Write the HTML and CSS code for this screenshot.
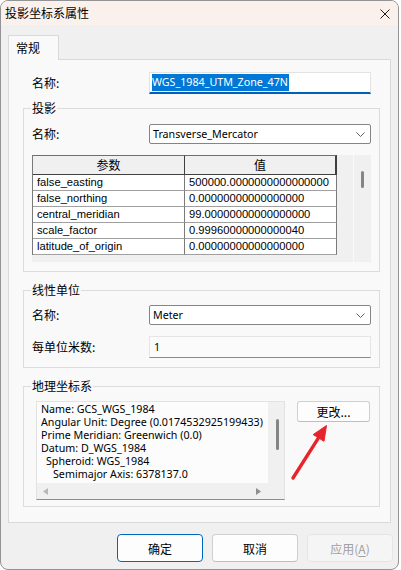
FILE: index.html
```html
<!DOCTYPE html>
<html lang="zh-CN">
<head>
<meta charset="utf-8">
<title>投影坐标系属性</title>
<link rel="stylesheet" href="styles.css">
</head>
<body>
<div class="window">
  <div class="titlebar">
    <span class="title">投影坐标系属性</span>
    <svg class="close" width="10" height="10" viewBox="0 0 10 10"><path d="M0.5 0.5L9.5 9.5M9.5 0.5L0.5 9.5" stroke="#1b1b1b" stroke-width="1"/></svg>
  </div>
  <div class="body">
    <div class="tabs"><div class="tab">常规</div></div>
    <div class="page">
      <div class="name-row">
        <span class="label">名称:</span>
        <div class="input focused"><span class="sel">WGS_1984_UTM_Zone_47N</span></div>
      </div>

      <fieldset class="group g-proj">
        <legend>投影</legend>
        <div class="ginner">
          <div class="row">
            <span class="label">名称:</span>
            <div class="combo"><span class="latin">Transverse_Mercator</span><svg class="chev" width="9" height="5" viewBox="0 0 9 5"><path d="M0.5 0.5L4.5 4.5L8.5 0.5" fill="none" stroke="#606060" stroke-width="1"/></svg></div>
          </div>
          <div class="grid-area">
            <div class="grid">
              <div class="ptable">
                <div class="hcell">参数</div><div class="hcell last">值</div>
                <div class="cell">false_easting</div><div class="cell">500000.0000000000000000</div>
                <div class="cell">false_northing</div><div class="cell">0.00000000000000000</div>
                <div class="cell">central_meridian</div><div class="cell">99.00000000000000000</div>
                <div class="cell">scale_factor</div><div class="cell">0.99960000000000040</div>
                <div class="cell">latitude_of_origin</div><div class="cell">0.00000000000000000</div>
              </div>
            </div>
            <div class="vscroll"><div class="vthumb"></div></div>
          </div>
        </div>
      </fieldset>

      <fieldset class="group g-unit">
        <legend>线性单位</legend>
        <div class="ginner">
          <div class="row">
            <span class="label">名称:</span>
            <div class="combo"><span class="latin">Meter</span><svg class="chev" width="9" height="5" viewBox="0 0 9 5"><path d="M0.5 0.5L4.5 4.5L8.5 0.5" fill="none" stroke="#606060" stroke-width="1"/></svg></div>
          </div>
          <div class="row row2">
            <span class="label">每单位米数:</span>
            <div class="input plain"><span class="latin">1</span></div>
          </div>
        </div>
      </fieldset>

      <fieldset class="group g-geo">
        <legend>地理坐标系</legend>
        <div class="ginner geo-inner">
          <div class="textbox">
            <div class="tb-main">
              <div class="tb-text latin">
                <div class="line">Name: GCS_WGS_1984</div>
                <div class="line">Angular Unit: Degree (0.0174532925199433)</div>
                <div class="line">Prime Meridian: Greenwich (0.0)</div>
                <div class="line">Datum: D_WGS_1984</div>
                <div class="line ind1">Spheroid: WGS_1984</div>
                <div class="line ind2">Semimajor Axis: 6378137.0</div>
              </div>
              <div class="tb-vscroll"><div class="tb-vthumb"></div></div>
            </div>
            <div class="tb-hscroll">
              <svg class="arr" width="5" height="7" viewBox="0 0 5 7"><path d="M5 0L0 3.5L5 7Z" fill="#b8b8b8"/></svg>
              <svg class="arr" width="5" height="7" viewBox="0 0 5 7"><path d="M0 0L5 3.5L0 7Z" fill="#8e8e8e"/></svg>
              <span class="corner"></span>
            </div>
          </div>
          <div class="btn small">更改...</div>
        </div>
      </fieldset>
    </div>

    <div class="buttons">
      <div class="btn big default">确定</div>
      <div class="btn big">取消</div>
      <div class="btn big disabled">应用(<u>A</u>)</div>
    </div>
  </div>

  <svg class="arrow" width="44" height="64" viewBox="0 0 44 64">
    <path d="M5 58L30.5 17.8" stroke="#e8242b" stroke-width="3.4" stroke-linecap="round" fill="none"/>
    <path d="M38.5 5.5L36 21.3L25.2 14.6Z" fill="#e8242b" stroke="#e8242b" stroke-width="1" stroke-linejoin="round"/>
  </svg>
</div>
</body>
</html>
```

FILE: styles.css
```css
* { box-sizing: border-box; }
html, body { margin: 0; padding: 0; background: #ffffff; }
body {
  font-family: "Noto Sans CJK SC", "Noto Sans", sans-serif;
  font-size: 12px;
  color: #000;
}
.latin { font-family: "Noto Sans", "Noto Sans CJK SC", sans-serif; font-size: 10.7px; }

.window {
  position: relative;
  width: 399px;
  height: 570px;
  border: 1px solid #939393;
  border-radius: 8px;
  background: #f0f0f0;
  overflow: hidden;
}
.titlebar {
  height: 24px;
  background: #faf1ec;
  display: flex;
  align-items: center;
  justify-content: space-between;
  padding: 0 8px 0 4px;
}
.title { font-size: 12px; line-height: 16px; }
.close { display: block; margin-top: 1px; }

.body { padding: 10px 0 0 7px; }
.tabs { display: flex; height: 24px; position: relative; z-index: 1; }
.tab {
  width: 51px;
  height: 25px;
  background: #f9f9f9;
  border: 1px solid #d9d9d9;
  border-bottom: none;
  padding-left: 7px;
  line-height: 23px;
}
.page {
  width: 383px;
  height: 464px;
  border: 1px solid #d9d9d9;
  background: #f9f9f9;
  padding-top: 12px;
}

.name-row, .row { display: flex; align-items: center; }
.name-row { height: 22px; padding-left: 23px; }
.label { width: 117px; flex: none; line-height: 16px; }

.input {
  width: 222px;
  height: 22px;
  background: #ffffff;
  border: 1px solid #e3e3e3;
  display: flex;
  align-items: flex-start;
}
.input.focused { border-bottom: 2px solid #005fb8; padding-left: 2px; }
.sel {
  font-family: "Noto Sans", sans-serif;
  font-size: 10.7px;
  background: #0078d7;
  color: #fff;
  height: 17px;
  line-height: 17px;
  margin-top: 1px;
  padding-right: 1px;
}
.input.plain {
  height: 22px;
  background: #fbfbfb;
  border-color: #e5e5e5;
  border-bottom-color: #8a8a8a;
  align-items: center;
  padding-left: 4px;
}

.group {
  margin: 6px 10px 0 14px;
  padding: 0;
  border: 1px solid #dcdcdc;
  min-width: 0;
}
.group legend {
  margin-left: 7px;
  padding: 0 1px;
  font-size: 12px;
  line-height: 16px;
}
.g-unit, .g-geo { margin-top: 10px; }
.ginner { padding: 8px 8px 9px 8px; }
.g-unit .ginner { padding: 7px 8px 9px 8px; }
.g-geo .ginner { padding: 7px 8px 6px 12px; }

.combo {
  width: 222px;
  height: 20px;
  background: #ffffff;
  border: 1px solid #858585;
  border-radius: 2px;
  display: flex;
  align-items: center;
  justify-content: space-between;
  padding: 0 5px 0 3px;
}
.chev { display: block; }
.row { height: 20px; }
.row2 { height: 22px; margin-top: 11px; }

.grid-area { display: flex; gap: 1px; margin-top: 11px; height: 107px; }
.grid { width: 321px; height: 107px; background: #f0f0f0; }
.vscroll { width: 17px; height: 107px; background: #f0f0f0; position: relative; padding: 16px 0 0 7px; }
.vthumb { width: 3px; height: 17px; background: #858585; border-radius: 2px; }

.ptable {
  display: grid;
  grid-template-columns: 152px 152px;
  width: 305px;
  border-left: 1px solid #7a7a7a;
  font-family: "Liberation Sans", Arial, sans-serif;
  font-size: 11.2px;
}
.hcell {
  height: 20px;
  background: #f0f0f0;
  border-top: 1px solid #6e6e6e;
  border-right: 1px solid #404040;
  border-bottom: 1px solid #404040;
  text-align: center;
  font-family: "Noto Sans CJK SC", sans-serif;
  font-size: 12px;
  line-height: 17px;
}
.hcell.last { border-right: 2px solid #404040; }
.cell {
  height: 16px;
  background: #ffffff;
  border-right: 1px solid #7a7a7a;
  border-bottom: 1px solid #a0a0a0;
  padding-left: 4px;
  line-height: 15px;
  white-space: nowrap;
  overflow: hidden;
}

.geo-inner { display: flex; align-items: flex-start; gap: 12px; }
.textbox {
  width: 249px;
  height: 99px;
  border: 1px solid #e2e2e2;
  border-bottom-color: #8c8c8c;
  display: flex;
  flex-direction: column;
}
.tb-main { display: flex; height: 81px; }
.tb-text {
  width: 231px;
  background: #fcfcfc;
  padding: 1px 0 0 4px;
  overflow: hidden;
  white-space: nowrap;
  line-height: 13px;
}
.line.ind1 { padding-left: 5px; }
.line.ind2 { padding-left: 12px; }
.tb-vscroll { width: 16px; background: #f0f0f0; padding: 17px 0 0 8px; }
.tb-vthumb { width: 3px; height: 31px; background: #858585; border-radius: 2px; }
.tb-hscroll {
  height: 16px;
  background: #f0f0f0;
  display: flex;
  align-items: center;
  padding-left: 6px;
}
.tb-hscroll .arr { display: block; }
.tb-hscroll .arr + .arr { margin-left: 208px; }
.corner { flex: 1; }

.btn {
  display: flex;
  align-items: center;
  justify-content: center;
  background: #fdfdfd;
  border: 1px solid #d0d0d0;
  border-bottom-color: #bebebe;
  border-radius: 4px;
}
.btn.small { width: 73px; height: 21px; border-radius: 3px; }
.buttons {
  display: flex;
  justify-content: flex-end;
  gap: 9px;
  margin-top: 11px;
  padding-right: 5px;
}
.btn.big { width: 86px; height: 28px; }
.btn.default { border: 1px solid #0067c0; }
.btn.disabled { background: #f5f5f5; border-color: #e5e5e5; color: #a0a0a0; }
.btn.disabled u { text-underline-offset: 2px; }

.arrow { position: absolute; left: 287px; top: 419px; }
```
